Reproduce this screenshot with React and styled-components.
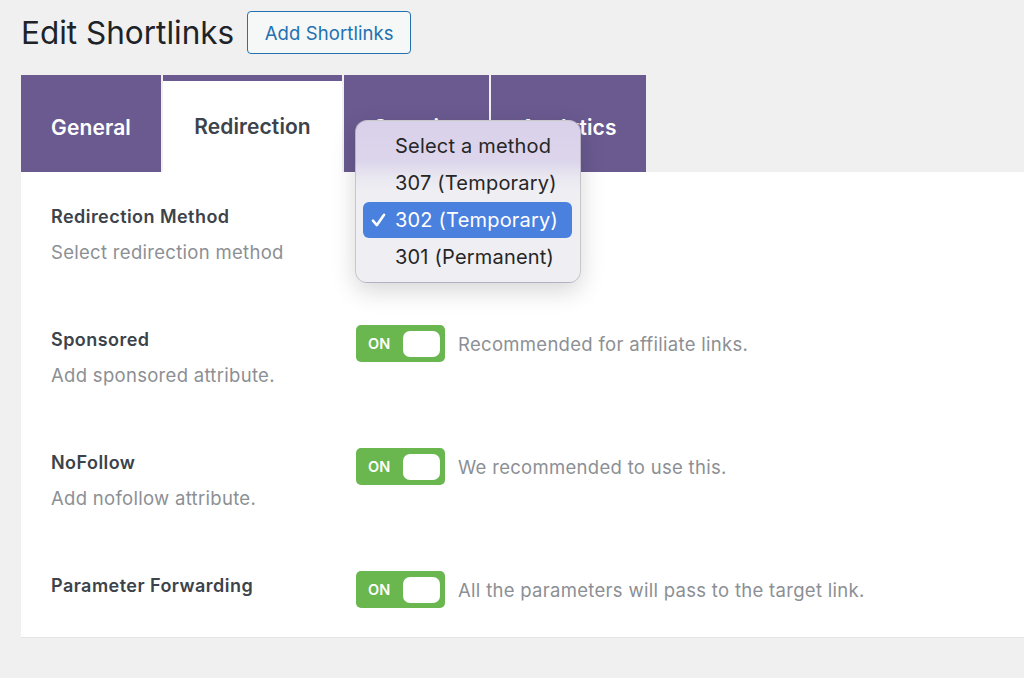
import React from "react";
import styled, { createGlobalStyle } from "styled-components";

const Global = createGlobalStyle`
  html, body { margin: 0; padding: 0; }
  body {
    background: #f0f0f1;
    font-family: Inter, "Noto Sans", "Liberation Sans", sans-serif;
    color: #1d2327;
    width: 1024px;
    height: 678px;
    overflow: hidden;
  }
`;

const Page = styled.div`
  padding: 11px 0 0 21px;
`;

const Header = styled.div`
  display: flex;
  align-items: center;
  gap: 13px;
  height: 43px;
`;

const Title = styled.h1`
  margin: 0;
  font-size: 31.5px;
  font-weight: 400;
  color: #1d2327;
`;

const HeaderButton = styled.button`
  height: 43px;
  width: 164px;
  border: 1px solid #2271b1;
  border-radius: 4px;
  background: #f6f7f7;
  color: #2271b1;
  font-family: inherit;
  font-size: 18.5px;
  letter-spacing: 0.1px;
  padding: 0;
`;

const TabBar = styled.div`
  display: flex;
  gap: 2px;
  margin-top: 21px;
  height: 97px;
`;

const Tab = styled.div`
  width: ${(p) => p.$w}px;
  box-sizing: border-box;
  display: flex;
  align-items: center;
  justify-content: center;
  font-size: 21px;
  font-weight: 600;
  letter-spacing: 0.1px;
  background: ${(p) => (p.$active ? "#ffffff" : "#6a5a90")};
  color: ${(p) => (p.$active ? "#3c434a" : "#ffffff")};
  border-top: ${(p) => (p.$active ? "6px solid #6a5a90" : "none")};
  padding-top: ${(p) => (p.$active ? "0" : "7px")};
`;

const Panel = styled.div`
  background: #ffffff;
  height: 466px;
  box-sizing: border-box;
  border-bottom: 1px solid #e2e4e7;
  padding: 0 30px;
`;

const Row = styled.div`
  display: grid;
  grid-template-columns: 305px 1fr;
  align-items: start;
  height: 123px;
  padding-top: 33px;
  box-sizing: border-box;
`;

const LabelCol = styled.div`
  display: flex;
  flex-direction: column;
  gap: 11px;
`;

const Label = styled.div`
  font-size: 18px;
  line-height: 24px;
  font-weight: 600;
  letter-spacing: 0.45px;
  color: #3c434a;
`;

const Desc = styled.div`
  font-size: 18.5px;
  line-height: 24px;
  letter-spacing: 0.3px;
  color: #8c8f94;
`;

const Control = styled.div`
  display: flex;
  align-items: center;
  gap: 13px;
  margin-top: -3px;
`;

const Toggle = styled.div`
  width: 89px;
  height: 37px;
  box-sizing: border-box;
  border-radius: 5px;
  background: #6ab64f;
  display: flex;
  align-items: center;
  justify-content: space-between;
  padding: 0 5px 0 12px;
`;

const ToggleText = styled.span`
  color: #ffffff;
  font-size: 14.5px;
  font-weight: 600;
`;

const Knob = styled.span`
  width: 37px;
  height: 26px;
  border-radius: 7px;
  background: #ffffff;
`;

const Hint = styled.span`
  font-size: 18.5px;
  letter-spacing: 0.3px;
  color: #8c8f94;
`;

const Menu = styled.div`
  position: absolute;
  left: 334px;
  top: 45px;
  width: 226px;
  box-sizing: border-box;
  padding: 7px 8px 7px 7px;
  border-radius: 12px;
  background: linear-gradient(
    to bottom,
    #d9d1ea 0px,
    #dcd5eb 40px,
    #e9e7f0 56px,
    #eeeef3 70px,
    #eeeef3 100%
  );
  border: 1px solid rgba(0, 0, 0, 0.16);
  box-shadow: 0 8px 24px rgba(0, 0, 0, 0.16);
  display: flex;
  flex-direction: column;
  gap: 1px;
`;

const MenuItem = styled.div`
  position: relative;
  height: 36px;
  border-radius: 6px;
  display: flex;
  align-items: center;
  padding-left: 32px;
  font-size: 20px;
  letter-spacing: 0.2px;
  color: ${(p) => (p.$selected ? "#ffffff" : "#262626")};
  background: ${(p) => (p.$selected ? "#4a80de" : "transparent")};
`;

const Check = styled.span`
  position: absolute;
  left: 8px;
  top: 50%;
  transform: translateY(-50%);
  display: flex;
`;

const Layer = styled.div`
  position: relative;
`;

const methods = [
  { label: "Select a method" },
  { label: "307 (Temporary)" },
  { label: "302 (Temporary)", selected: true },
  { label: "301 (Permanent)" },
];

const toggles = [
  { label: "Sponsored", desc: "Add sponsored attribute.", hint: "Recommended for affiliate links." },
  { label: "NoFollow", desc: "Add nofollow attribute.", hint: "We recommended to use this." },
  { label: "Parameter Forwarding", hint: "All the parameters will pass to the target link." },
];

export default function App() {
  return (
    <>
      <Global />
      <Page>
        <Header>
          <Title>Edit Shortlinks</Title>
          <HeaderButton>Add Shortlinks</HeaderButton>
        </Header>
        <Layer>
          <TabBar>
            <Tab $w={140}>General</Tab>
            <Tab $w={179} $active>Redirection</Tab>
            <Tab $w={145}>Security</Tab>
            <Tab $w={155}>Analytics</Tab>
          </TabBar>
          <Panel>
            <Row>
              <LabelCol>
                <Label>Redirection Method</Label>
                <Desc>Select redirection method</Desc>
              </LabelCol>
            </Row>
            {toggles.map((t) => (
              <Row key={t.label}>
                <LabelCol>
                  <Label>{t.label}</Label>
                  {t.desc && <Desc>{t.desc}</Desc>}
                </LabelCol>
                <Control>
                  <Toggle>
                    <ToggleText>ON</ToggleText>
                    <Knob />
                  </Toggle>
                  <Hint>{t.hint}</Hint>
                </Control>
              </Row>
            ))}
          </Panel>
          <Menu>
            {methods.map((m) => (
              <MenuItem key={m.label} $selected={m.selected}>
                {m.selected && (
                  <Check>
                    <svg width="15" height="15" viewBox="0 0 14 14">
                      <path d="M1.8 7.6 L5.4 11.8 L12.2 2.2" fill="none" stroke="#fff" strokeWidth="2.4" strokeLinecap="round" strokeLinejoin="round" />
                    </svg>
                  </Check>
                )}
                {m.label}
              </MenuItem>
            ))}
          </Menu>
        </Layer>
      </Page>
    </>
  );
}
